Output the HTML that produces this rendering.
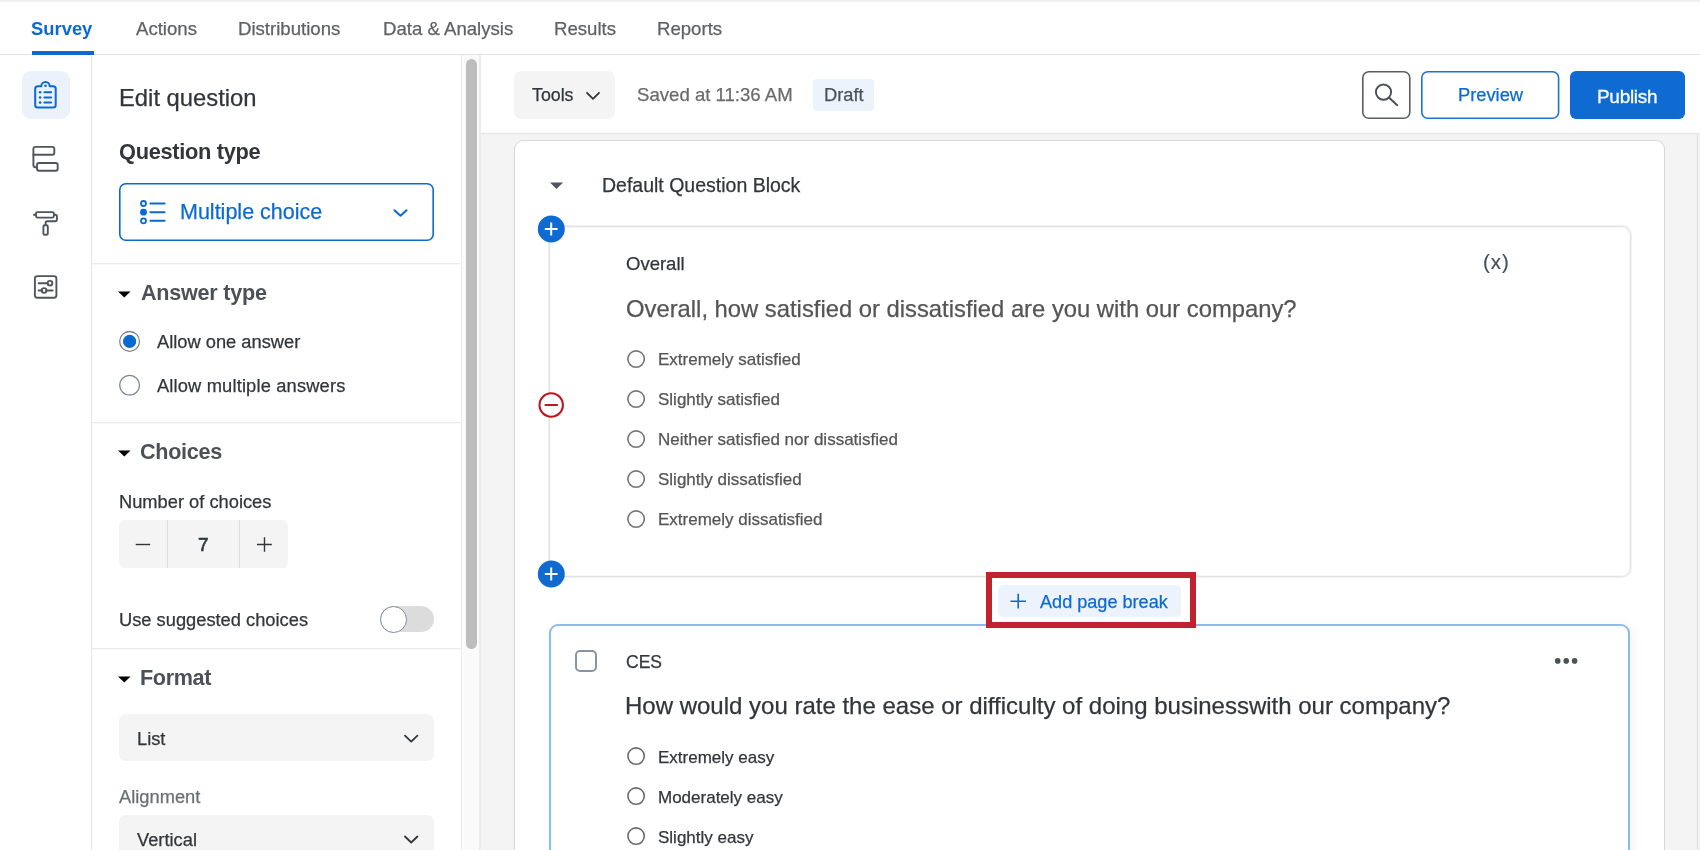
<!DOCTYPE html>
<html><head><meta charset="utf-8"><style>
html,body{margin:0;padding:0;}
body{width:1700px;height:850px;overflow:hidden;position:relative;background:#fff;font-family:"Liberation Sans",sans-serif;}
.t{position:absolute;white-space:nowrap;line-height:1.117;will-change:transform;}
body{-webkit-font-smoothing:antialiased;}
.r{position:absolute;}
svg{position:absolute;overflow:visible;}
</style></head><body>
<div class="r" style="left:0px;top:0px;width:1700px;height:2px;background:linear-gradient(#efefef,#f3f3f3);"></div>
<div class="r" style="left:0px;top:54px;width:1700px;height:1px;background:#e3e3e3;"></div>
<div class="t" style="left:31px;top:19.25px;font-size:18.4px;color:#0b6ad2;font-weight:700;">Survey</div>
<div class="t" style="left:136px;top:19.07px;font-size:18.6px;color:#5f6164;-webkit-text-stroke:0.25px #5f6164;">Actions</div>
<div class="t" style="left:238px;top:19.07px;font-size:18.6px;color:#5f6164;-webkit-text-stroke:0.25px #5f6164;">Distributions</div>
<div class="t" style="left:383px;top:19.07px;font-size:18.6px;color:#5f6164;-webkit-text-stroke:0.25px #5f6164;">Data &amp; Analysis</div>
<div class="t" style="left:554px;top:19.07px;font-size:18.6px;color:#5f6164;-webkit-text-stroke:0.25px #5f6164;">Results</div>
<div class="t" style="left:657px;top:19.07px;font-size:18.6px;color:#5f6164;-webkit-text-stroke:0.25px #5f6164;">Reports</div>
<div class="r" style="left:32px;top:51px;width:62px;height:4px;background:#0b6ad2;"></div>
<div class="r" style="left:91px;top:55px;width:1px;height:795px;background:#e6e6e6;"></div>
<div class="r" style="left:22px;top:71px;width:48px;height:48px;background:#ebf2fc;border-radius:9px;"></div>
<div class="r" style="left:461px;top:55px;width:20px;height:795px;background:#fafafa;border-left:1px solid #ececec;border-right:2px solid #ececec;box-sizing:border-box;"></div>
<div class="r" style="left:466px;top:59px;width:11px;height:590px;background:#bdbdbd;border-radius:6px;"></div>
<div class="t" style="left:119px;top:85.16px;font-size:23.8px;color:#32363a;-webkit-text-stroke:0.25px #32363a;">Edit question</div>
<div class="t" style="left:119px;top:140.17px;font-size:21.8px;color:#32363a;font-weight:700;letter-spacing:-0.3px;">Question type</div>
<svg style="left:116px;top:180px" width="322" height="64" viewBox="116 180 322 64"><rect x="119.8" y="183.8" width="313.4" height="56.4" rx="6" fill="none" stroke="#0b6ad2" stroke-width="1.6"/></svg>
<div class="t" style="left:179.5px;top:200.44px;font-size:21.5px;color:#0b6ad2;-webkit-text-stroke:0.25px #0b6ad2;">Multiple choice</div>
<div class="r" style="left:92px;top:263px;width:369px;height:1px;background:#ebebeb;"></div>
<div class="r" style="left:92px;top:264px;width:369px;height:1px;background:#f7f7f7;"></div>
<div class="t" style="left:140.5px;top:280.65px;font-size:21.6px;color:#4c5157;font-weight:700;letter-spacing:-0.25px;">Answer type</div>
<div class="t" style="left:156.5px;top:332.14px;font-size:18.3px;color:#32363a;-webkit-text-stroke:0.25px #32363a;">Allow one answer</div>
<div class="t" style="left:156.5px;top:376.34px;font-size:18.3px;color:#32363a;-webkit-text-stroke:0.25px #32363a;letter-spacing:0.16px;">Allow multiple answers</div>
<div class="r" style="left:92px;top:422px;width:369px;height:1px;background:#ebebeb;"></div>
<div class="r" style="left:92px;top:423px;width:369px;height:1px;background:#f7f7f7;"></div>
<div class="t" style="left:139.5px;top:439.55px;font-size:21.6px;color:#4c5157;font-weight:700;letter-spacing:-0.3px;">Choices</div>
<div class="t" style="left:119px;top:491.74px;font-size:18.3px;color:#32363a;-webkit-text-stroke:0.25px #32363a;">Number of choices</div>
<div class="r" style="left:119px;top:520px;width:169px;height:48px;background:#f4f4f4;border-radius:6px;"></div>
<div class="r" style="left:167px;top:520px;width:1px;height:48px;background:#dedede;"></div>
<div class="r" style="left:239px;top:520px;width:1px;height:48px;background:#dedede;"></div>
<div class="t" style="left:198px;top:534.20px;font-size:19px;color:#32363a;-webkit-text-stroke:0.6px #32363a;">7</div>
<div class="t" style="left:119px;top:610.34px;font-size:18.3px;color:#32363a;-webkit-text-stroke:0.25px #32363a;">Use suggested choices</div>
<div class="r" style="left:380px;top:606px;width:54px;height:26px;background:#dcdcdc;border-radius:13px;"></div>
<div class="r" style="left:380px;top:606px;width:27px;height:27px;background:#fff;border:1.5px solid #7f8a99;border-radius:50%;box-sizing:border-box;"></div>
<div class="r" style="left:92px;top:648px;width:369px;height:1px;background:#ebebeb;"></div>
<div class="r" style="left:92px;top:649px;width:369px;height:1px;background:#f7f7f7;"></div>
<div class="t" style="left:139.5px;top:665.85px;font-size:21.6px;color:#4c5157;font-weight:700;letter-spacing:-0.35px;">Format</div>
<div class="r" style="left:119px;top:714px;width:315px;height:47px;background:#f4f4f4;border-radius:7px;"></div>
<div class="t" style="left:137px;top:729.34px;font-size:18.3px;color:#32363a;-webkit-text-stroke:0.25px #32363a;">List</div>
<div class="t" style="left:119px;top:787.34px;font-size:18.3px;color:#6b6e72;-webkit-text-stroke:0.25px #6b6e72;">Alignment</div>
<div class="r" style="left:119px;top:815px;width:315px;height:60px;background:#f4f4f4;border-radius:7px;"></div>
<div class="t" style="left:137px;top:829.74px;font-size:18.3px;color:#32363a;-webkit-text-stroke:0.25px #32363a;">Vertical</div>
<div class="r" style="left:481px;top:55px;width:1219px;height:78px;background:#fff;"></div>
<div class="r" style="left:481px;top:133px;width:1219px;height:717px;background:#f4f4f4;"></div>
<div class="r" style="left:481px;top:133px;width:1219px;height:1px;background:#e9e9e9;"></div>
<div class="r" style="left:481px;top:132px;width:1219px;height:1px;background:#f9f9f9;"></div>
<div class="r" style="left:481px;top:134px;width:1219px;height:1px;background:#f0f0f0;"></div>
<div class="r" style="left:514px;top:71px;width:101px;height:48px;background:#f4f4f4;border-radius:7px;"></div>
<div class="t" style="left:531.5px;top:86.19px;font-size:17.8px;color:#32363a;-webkit-text-stroke:0.25px #32363a;">Tools</div>
<div class="t" style="left:637px;top:85.47px;font-size:18.6px;color:#6b6b6b;-webkit-text-stroke:0.25px #6b6b6b;">Saved at 11:36 AM</div>
<div class="r" style="left:813px;top:79px;width:61px;height:32px;background:#edf3fc;border-radius:4px;"></div>
<div class="t" style="left:824px;top:85.14px;font-size:18.3px;color:#4c5157;-webkit-text-stroke:0.25px #4c5157;">Draft</div>
<svg style="left:1360px;top:69px" width="53" height="52" viewBox="1360 69 53 52"><rect x="1362.8" y="71.8" width="47" height="46.4" rx="6" fill="#fff" stroke="#5a5e63" stroke-width="1.6"/></svg>
<svg style="left:1419px;top:69px" width="143" height="52" viewBox="1419 69 143 52"><rect x="1421.8" y="71.8" width="136.8" height="46.4" rx="6" fill="#fff" stroke="#1f72d3" stroke-width="1.6"/></svg>
<div class="t" style="left:1458px;top:85.34px;font-size:18.3px;color:#0b6ad2;-webkit-text-stroke:0.25px #0b6ad2;">Preview</div>
<div class="r" style="left:1570px;top:71px;width:115px;height:48px;background:#0f6bd1;border-radius:6px;"></div>
<div class="t" style="left:1597px;top:85.71px;font-size:19px;color:#ffffff;letter-spacing:-0.3px;-webkit-text-stroke:0.3px #fff;">Publish</div>
<div class="r" style="left:1697px;top:134px;width:1px;height:716px;background:#e0e0e0;"></div>
<div class="r" style="left:514px;top:140px;width:1151px;height:760px;background:#fff;border:1px solid #d7d7d7;border-radius:9px;box-sizing:border-box;"></div>
<div class="t" style="left:602px;top:175.25px;font-size:19.5px;color:#32363a;-webkit-text-stroke:0.25px #32363a;">Default Question Block</div>
<div class="r" style="left:549px;top:226px;width:1082px;height:351px;border:1px solid #e4e4e4;border-radius:9px;box-sizing:border-box;box-shadow:0 0 0 1px #f1f1f1, inset 0 0 0 1px #f6f6f6;"></div>
<div class="t" style="left:626px;top:254.16px;font-size:18.5px;color:#32363a;-webkit-text-stroke:0.25px #32363a;">Overall</div>
<div class="t" style="left:626px;top:296.36px;font-size:23.8px;color:#555555;-webkit-text-stroke:0.25px #555555;">Overall, how satisfied or dissatisfied are you with our company?</div>
<svg style="left:624px;top:347px" width="24" height="24" viewBox="624 347 24 24"><circle cx="636.1" cy="359.1" r="8.2" fill="none" stroke="#767676" stroke-width="1.6"/></svg>
<div class="t" style="left:657.5px;top:350.21px;font-size:17px;color:#555555;-webkit-text-stroke:0.25px #555555;">Extremely satisfied</div>
<svg style="left:624px;top:387px" width="24" height="24" viewBox="624 387 24 24"><circle cx="636.1" cy="399.1" r="8.2" fill="none" stroke="#767676" stroke-width="1.6"/></svg>
<div class="t" style="left:657.5px;top:390.21px;font-size:17px;color:#555555;-webkit-text-stroke:0.25px #555555;">Slightly satisfied</div>
<svg style="left:624px;top:427px" width="24" height="24" viewBox="624 427 24 24"><circle cx="636.1" cy="439.1" r="8.2" fill="none" stroke="#767676" stroke-width="1.6"/></svg>
<div class="t" style="left:657.5px;top:430.21px;font-size:17px;color:#555555;-webkit-text-stroke:0.25px #555555;">Neither satisfied nor dissatisfied</div>
<svg style="left:624px;top:467px" width="24" height="24" viewBox="624 467 24 24"><circle cx="636.1" cy="479.1" r="8.2" fill="none" stroke="#767676" stroke-width="1.6"/></svg>
<div class="t" style="left:657.5px;top:470.21px;font-size:17px;color:#555555;-webkit-text-stroke:0.25px #555555;">Slightly dissatisfied</div>
<svg style="left:624px;top:507px" width="24" height="24" viewBox="624 507 24 24"><circle cx="636.1" cy="519.1" r="8.2" fill="none" stroke="#767676" stroke-width="1.6"/></svg>
<div class="t" style="left:657.5px;top:510.22px;font-size:17px;color:#555555;-webkit-text-stroke:0.25px #555555;">Extremely dissatisfied</div>
<div class="t" style="left:1482.5px;top:250.65px;font-size:20.5px;color:#4c5157;letter-spacing:0.9px;-webkit-text-stroke:0.2px #4c5157;">(x)</div>
<div class="r" style="left:549px;top:624px;width:1081px;height:300px;border:2px solid #8cbbec;border-radius:9px;box-sizing:border-box;background:#fff;box-shadow:2px 2px 14px rgba(0,0,0,0.06);"></div>
<div class="r" style="left:575px;top:650px;width:22px;height:22px;border:2px solid #8a94a0;border-radius:5px;box-sizing:border-box;"></div>
<div class="t" style="left:626px;top:652.86px;font-size:17.5px;color:#32363a;-webkit-text-stroke:0.25px #32363a;">CES</div>
<div class="t" style="left:625px;top:693.48px;font-size:24px;color:#32363a;-webkit-text-stroke:0.25px #32363a;">How would you rate the ease or difficulty of doing businesswith our company?</div>
<svg style="left:624px;top:744px" width="24" height="24" viewBox="624 744 24 24"><circle cx="636.1" cy="756.1" r="8.2" fill="none" stroke="#6b6b6b" stroke-width="1.6"/></svg>
<div class="t" style="left:657.5px;top:748.01px;font-size:17px;color:#32363a;-webkit-text-stroke:0.25px #32363a;">Extremely easy</div>
<svg style="left:624px;top:784px" width="24" height="24" viewBox="624 784 24 24"><circle cx="636.1" cy="796.1" r="8.2" fill="none" stroke="#6b6b6b" stroke-width="1.6"/></svg>
<div class="t" style="left:657.5px;top:788.01px;font-size:17px;color:#32363a;-webkit-text-stroke:0.25px #32363a;">Moderately easy</div>
<svg style="left:624px;top:824px" width="24" height="24" viewBox="624 824 24 24"><circle cx="636.1" cy="836.1" r="8.2" fill="none" stroke="#6b6b6b" stroke-width="1.6"/></svg>
<div class="t" style="left:657.5px;top:828.01px;font-size:17px;color:#32363a;-webkit-text-stroke:0.25px #32363a;">Slightly easy</div>
<div class="r" style="left:986px;top:572px;width:210px;height:56px;border:6px solid #c0222f;box-sizing:border-box;background:#fff;"></div>
<div class="r" style="left:998px;top:585px;width:183px;height:32px;background:#edf3fc;border-radius:5px;"></div>
<div class="t" style="left:1039.5px;top:592.12px;font-size:18.1px;color:#0b6ad2;-webkit-text-stroke:0.25px #0b6ad2;">Add page break</div>
<svg style="left:28px;top:75px" width="36" height="40" viewBox="28 75 36 40"><g fill="none" stroke="#0b6ad2" stroke-width="2" stroke-linejoin="round"><path d="M41.3 86.3 H37.7 Q35.2 86.3 35.2 88.8 V105 Q35.2 107.5 37.7 107.5 H53.2 Q55.7 107.5 55.7 105 V88.8 Q55.7 86.3 53.2 86.3 H49.7 A4.2 4.2 0 0 0 41.3 86.3 Z"/><path stroke-linecap="round" d="M44.4 92.2 H51.2 M44.4 97.5 H51.2 M44.4 102.6 H51.2"/></g><g fill="#0b6ad2"><circle cx="45.5" cy="85.7" r="1.3"/><circle cx="40.1" cy="92.2" r="1.3"/><circle cx="40.1" cy="97.5" r="1.3"/><circle cx="40.1" cy="102.6" r="1.3"/></g></svg>
<svg style="left:28px;top:140px" width="36" height="36" viewBox="28 140 36 36"><g fill="none" stroke="#50555b" stroke-width="1.9" stroke-linejoin="round"><path d="M35.4 146.9 H52.3 Q54.3 146.9 54.3 148.9 V152.7 Q54.3 154.7 52.3 154.7 H33.4 V148.9 Q33.4 146.9 35.4 146.9 Z"/><path d="M33.4 154 V165 Q33.4 167.4 36 167.4 H37"/><rect x="37" y="163" width="20.7" height="7.8" rx="2"/></g></svg>
<svg style="left:28px;top:205px" width="36" height="36" viewBox="28 205 36 36"><g fill="none" stroke="#50555b" stroke-width="1.9" stroke-linejoin="round"><rect x="36" y="212.1" width="17.9" height="5.5" rx="1.5"/><path d="M33.2 214.8 H36 M53.9 214.8 H55.3 Q56.9 214.8 56.9 216.4 V219.6 Q56.9 221.2 55.3 221.2 H47.2 Q45.6 221.2 45.6 222.8 V225.3"/><rect x="43.4" y="225.3" width="4.4" height="9.4" rx="1.3"/></g></svg>
<svg style="left:28px;top:269px" width="36" height="36" viewBox="28 269 36 36"><g fill="none" stroke="#50555b" stroke-width="1.9"><rect x="34.9" y="276.1" width="21.5" height="21.6" rx="2.5"/><path stroke-linecap="round" d="M38.6 283.2 H47.7 M38.6 290.5 H41.8 M46.4 290.5 H52.6"/><circle cx="50" cy="283.2" r="2.35"/><circle cx="44.1" cy="290.5" r="2.35"/></g></svg>
<svg style="left:136px;top:196px" width="34" height="32" viewBox="136 196 34 32"><g fill="none" stroke="#0b6ad2" stroke-width="1.8"><circle cx="143.5" cy="203.5" r="2.5"/><circle cx="143.5" cy="220.8" r="2.5"/><path stroke-width="2" stroke-linecap="round" d="M150.4 203.5 H164.6 M150.4 212.2 H164.6 M150.4 220.8 H164.6"/></g><circle fill="#0b6ad2" cx="143.5" cy="212.2" r="3.4"/></svg>
<svg style="left:390px;top:206px" width="20" height="13" viewBox="390 206 20 13"><path fill="none" stroke="#0b6ad2" stroke-width="2" stroke-linecap="round" stroke-linejoin="round" d="M394.45 210.25 L400.5 215.75 L406.55 210.25"/></svg>
<svg style="left:400px;top:731px" width="20" height="14" viewBox="400 731 20 14"><path fill="none" stroke="#32363a" stroke-width="1.8" stroke-linecap="round" stroke-linejoin="round" d="M404.95 735.6 L411.2 741.6 L417.45 735.6"/></svg>
<svg style="left:400px;top:832px" width="20" height="14" viewBox="400 832 20 14"><path fill="none" stroke="#32363a" stroke-width="1.8" stroke-linecap="round" stroke-linejoin="round" d="M404.95 836.5 L411.2 842.5 L417.45 836.5"/></svg>
<svg style="left:583px;top:88px" width="20" height="14" viewBox="583 88 20 14"><path fill="none" stroke="#32363a" stroke-width="1.8" stroke-linecap="round" stroke-linejoin="round" d="M587.0 92.8 L593 98.8 L599.0 92.8"/></svg>
<svg style="left:116px;top:289px" width="16" height="10" viewBox="116 289 16 10"><path fill="#000" d="M118 291.6 H130.6 L124.3 297.6 Z"/></svg>
<svg style="left:116px;top:448px" width="16" height="10" viewBox="116 448 16 10"><path fill="#000" d="M118 450.6 H130.6 L124.3 456.6 Z"/></svg>
<svg style="left:116px;top:674px" width="16" height="10" viewBox="116 674 16 10"><path fill="#000" d="M118 676.6 H130.6 L124.3 682.6 Z"/></svg>
<svg style="left:548px;top:180px" width="17" height="10" viewBox="548 180 17 10"><path fill="#50555b" d="M550 182.6 H563 L556.5 189 Z"/></svg>
<svg style="left:116px;top:328px" width="30" height="70" viewBox="116 328 30 70"><circle cx="129.6" cy="341.4" r="9.9" fill="#fff" stroke="#7b8490" stroke-width="1.3"/><circle cx="129.6" cy="341.4" r="6.6" fill="#0b6ad2"/><circle cx="129.6" cy="385.2" r="9.9" fill="#fff" stroke="#7b8490" stroke-width="1.3"/></svg>
<svg style="left:130px;top:530px" width="150" height="30" viewBox="130 530 150 30"><g stroke="#32363a" stroke-width="1.4"><path d="M135.7 544.5 H150.2"/><path d="M257 544.5 H271.8 M264.5 537.2 V551.8"/></g></svg>
<svg style="left:1370px;top:80px" width="32" height="30" viewBox="1370 80 32 30"><g fill="none" stroke="#4a4f55" stroke-width="1.9" stroke-linecap="round"><circle cx="1383.5" cy="92.1" r="7.6"/><path d="M1389.2 97.8 L1397.2 105.2"/></g></svg>
<svg style="left:1550px;top:654px" width="32" height="14" viewBox="1550 654 32 14"><g fill="#4c5157"><circle cx="1557.7" cy="660.9" r="2.8"/><circle cx="1566.2" cy="660.9" r="2.8"/><circle cx="1574.6" cy="660.9" r="2.8"/></g></svg>
<svg style="left:536px;top:214px" width="30" height="30" viewBox="536 214 30 30"><circle cx="551.3" cy="229" r="13.5" fill="#0f6bd1"/><path stroke="#fff" stroke-width="2" d="M544.8 229 H557.6 M551.2 222.6 V235.4"/></svg>
<svg style="left:536px;top:559px" width="30" height="30" viewBox="536 559 30 30"><circle cx="551.3" cy="574" r="13.5" fill="#0f6bd1"/><path stroke="#fff" stroke-width="2" d="M544.8 574 H557.6 M551.2 567.6 V580.4"/></svg>
<svg style="left:536px;top:390px" width="30" height="30" viewBox="536 390 30 30"><circle cx="551.2" cy="405" r="11.7" fill="#fff" stroke="#c0141b" stroke-width="2.1"/><path stroke="#c0141b" stroke-width="2.2" stroke-linecap="round" d="M545.5 405 H557"/></svg>
<svg style="left:1006px;top:590px" width="24" height="22" viewBox="1006 590 24 22"><path stroke="#0b6ad2" stroke-width="1.6" d="M1010.5 601.2 H1026 M1018.2 593.7 V608.6"/></svg>
</body></html>
